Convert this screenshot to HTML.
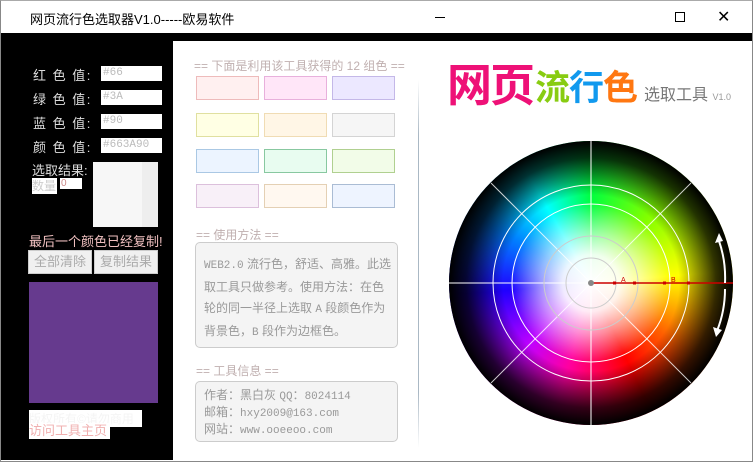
<!DOCTYPE html>
<html><head><meta charset="utf-8"><style>
*{margin:0;padding:0;box-sizing:border-box}
body{width:753px;height:462px;overflow:hidden;background:#fff;font-family:"Liberation Sans","Noto Sans CJK SC",sans-serif;font-size:12px;position:relative}
.a{position:absolute;white-space:nowrap}
.win{left:0;top:0;width:753px;height:462px;border:1px solid #888;border-top-color:#aaa}
.title{left:30px;top:9px;font-size:13px;color:#000}
.lbl{color:#ddd;font-size:13px;letter-spacing:1.5px}
.inp{background:#fff;width:61px;height:15px;color:#bbb;font-size:11px;line-height:15px;padding-left:2px;font-family:"Liberation Mono",monospace}
.btn{background:#f0f0f0;border:1px solid #ccc;color:#aaa;font-size:13px;text-align:center;line-height:22px;height:24px;width:64px}
.sw{width:63px;height:24px;border:1px solid}
.hd{color:#c0b0b0;font-size:12px}
.box{border:1px solid #ccc;border-radius:5px;background:#f4f4f4;color:#999;font-size:12px;line-height:21px;padding:12px 8px}
.m{font-family:"Liberation Mono",monospace;font-size:11px}
</style></head><body>
<div class="a win"></div>
<div class="a title">网页流行色选取器V1.0-----欧易软件</div>
<div class="a" style="left:435px;top:17px;width:10px;height:1px;background:#000"></div>
<div class="a" style="left:675px;top:12px;width:10px;height:10px;border:1px solid #000"></div>
<div class="a" style="left:717px;top:7px;font-size:16px;color:#000">✕</div>
<div class="a" style="left:1px;top:33px;width:751px;height:8px;background:#000"></div>
<div class="a" style="left:1px;top:41px;width:172px;height:419px;background:#000"></div>
<div class="a" style="left:748px;top:41px;width:4px;height:419px;background:#fff"></div>

<div class="a lbl" style="left:33px;top:65px">红 色 值:</div>
<div class="a lbl" style="left:33px;top:89px">绿 色 值:</div>
<div class="a lbl" style="left:33px;top:113px">蓝 色 值:</div>
<div class="a lbl" style="left:33px;top:137px">颜 色 值:</div>
<div class="a inp" style="left:101px;top:66px">#66</div>
<div class="a inp" style="left:101px;top:90px">#3A</div>
<div class="a inp" style="left:101px;top:114px">#90</div>
<div class="a inp" style="left:101px;top:138px">#663A90</div>
<div class="a" style="left:32px;top:160px;color:#ddd;font-size:13px">选取结果:</div>
<div class="a" style="left:32px;top:178px;width:25px;height:16px;background:#fff;color:#ccc;font-size:12px;line-height:16px;overflow:hidden">数量</div>
<div class="a" style="left:60px;top:178px;width:22px;height:11px;background:#fff;color:#c88;font-size:10px;line-height:11px;padding-left:1px">0</div>
<div class="a" style="left:93px;top:162px;width:65px;height:65px;background:#f7f7f7"></div>
<div class="a" style="left:142px;top:162px;width:16px;height:65px;background:#eee"></div>
<div class="a" style="left:29px;top:231px;color:#f0c0c0;font-size:13px">最后一个颜色已经复制!</div>
<div class="a btn" style="left:28px;top:250px">全部清除</div>
<div class="a btn" style="left:94px;top:250px">复制结果</div>
<div class="a" style="left:29px;top:282px;width:129px;height:121px;background:#663a8e"></div>
<div class="a" style="left:29px;top:410px;width:113px;height:17px;background:#fff;color:#f4f4f4;font-size:12px;overflow:hidden">版权所有©请勿商用</div>
<div class="a" style="left:29px;top:423px;width:81px;height:16px;background:#fff;color:#f0b0b0;font-size:13px;line-height:16px;overflow:hidden">访问工具主页</div>

<div class="a hd" style="left:194px;top:57px">== 下面是利用该工具获得的 12 组色 ==</div>
<div class="a sw" style="left:196px;top:76px;background:#fff0f0;border-color:#ebb"></div>
<div class="a sw" style="left:264px;top:76px;background:#ffe6f8;border-color:#e8b0dc"></div>
<div class="a sw" style="left:332px;top:76px;background:#ece8ff;border-color:#c4b8e8"></div>
<div class="a sw" style="left:196px;top:113px;background:#ffffe4;border-color:#e0e0a0"></div>
<div class="a sw" style="left:264px;top:113px;background:#fff6e6;border-color:#f0dcb4"></div>
<div class="a sw" style="left:332px;top:113px;background:#f6f6f6;border-color:#d4d4d4"></div>
<div class="a sw" style="left:196px;top:149px;background:#ecf4ff;border-color:#aac8e4"></div>
<div class="a sw" style="left:264px;top:149px;background:#e8fcf0;border-color:#88c8a0"></div>
<div class="a sw" style="left:332px;top:149px;background:#f2fce8;border-color:#b0d090"></div>
<div class="a sw" style="left:196px;top:184px;background:#f8f0f8;border-color:#dcc0dc"></div>
<div class="a sw" style="left:264px;top:184px;background:#fff8f0;border-color:#e4d0b4"></div>
<div class="a sw" style="left:332px;top:184px;background:#eef4ff;border-color:#aabcd4"></div>

<div class="a hd" style="left:196px;top:226px">== 使用方法 ==</div>
<div class="a box" style="left:195px;top:242px;width:203px;height:106px;padding:11px 8px"><span class="m">WEB2.0</span> 流行色，舒适、高雅。此选<br>取工具只做参考。使用方法：在色<br>轮的同一半径上选取 <span class="m">A</span> 段颜色作为<br>背景色，<span class="m">B</span> 段作为边框色。</div>
<div class="a hd" style="left:196px;top:362px">== 工具信息 ==</div>
<div class="a box" style="left:195px;top:381px;width:203px;height:61px;padding:6px 8px;line-height:15px">作者：黑白灰 <span class="m">QQ</span>：<span class="m">8024114</span><br>邮箱：<span class="m">hxy2009@163.com</span><br>网站：<span class="m">www.ooeeoo.com</span></div>

<div class="a" style="left:418px;top:80px;width:1px;height:368px;background:linear-gradient(#fff,#aab8c4 15%,#aab8c4 85%,#fff)"></div>

<div class="a" style="left:447px;top:58px;font-size:45px;font-weight:bold;color:#ee1177;line-height:56px;letter-spacing:-2px">网页</div>
<div class="a" style="left:535px;top:66px;font-size:35px;font-weight:bold;line-height:46px;letter-spacing:-1px"><span style="color:#88cc11">流</span><span style="color:#1199ee">行</span><span style="color:#ff7711">色</span></div>
<div class="a" style="left:644px;top:86px;font-size:16px;color:#777;line-height:20px">选取工具 <span style="font-size:9px;color:#999">V1.0</span></div>

<div class="a" style="left:449px;top:141px;width:284px;height:284px;border-radius:50%;background:conic-gradient(from 0deg,#00ff40,#80ff00 40deg,#ffff00 85deg,#ff6000 125deg,#ff0000 155deg,#ff00a0 195deg,#c000ff 225deg,#2000ff 265deg,#0080ff 300deg,#00ffff 330deg,#00ff40)"></div>
<div class="a" style="left:449px;top:141px;width:284px;height:284px;border-radius:50%;background:radial-gradient(circle closest-side,#fff 0%,rgba(255,255,255,.92) 20%,rgba(255,255,255,.55) 36%,rgba(255,255,255,0) 56%,rgba(0,0,0,0) 62%,rgba(0,0,0,.8) 88%,#000 100%)"></div>
<svg class="a" style="left:449px;top:141px" width="284" height="284" viewBox="0 0 284 284">
<g stroke="#fff" stroke-width="1" fill="none">
<line x1="142" y1="0" x2="142" y2="284"/><line x1="0" y1="142" x2="142" y2="142"/>
<line x1="42" y1="42" x2="242" y2="242" stroke-opacity=".8"/><line x1="242" y1="42" x2="42" y2="242" stroke-opacity=".8"/>
<circle cx="142" cy="142" r="98"/><circle cx="142" cy="142" r="79"/>
</g>
<g stroke="#ccc" fill="none"><circle cx="142" cy="142" r="47"/><circle cx="142" cy="142" r="25"/></g>
<line x1="142" y1="142" x2="284" y2="142" stroke="#c00" stroke-width="1.5"/>
<circle cx="142" cy="142" r="3" fill="#888"/>
<g fill="#c00"><rect x="164" y="140.5" width="3" height="3"/><rect x="184" y="140.5" width="3" height="3"/><rect x="214" y="140.5" width="3" height="3"/><rect x="238" y="140.5" width="3" height="3"/></g>
<text x="172" y="141" font-size="7" fill="#c00" font-family="Liberation Sans">A</text>
<text x="222" y="141" font-size="7" fill="#c00" font-family="Liberation Sans">B</text>
<path d="M270 100 Q277 120 276 142" stroke="#fff" stroke-width="2" fill="none"/>
<path d="M266 102 L270 92 L274 100 Z" fill="#fff"/>
<path d="M276 148 Q276 170 268 190" stroke="#fff" stroke-width="2" fill="none"/>
<path d="M264 186 L267 196 L273 189 Z" fill="#fff"/>
</svg>
</body></html>
